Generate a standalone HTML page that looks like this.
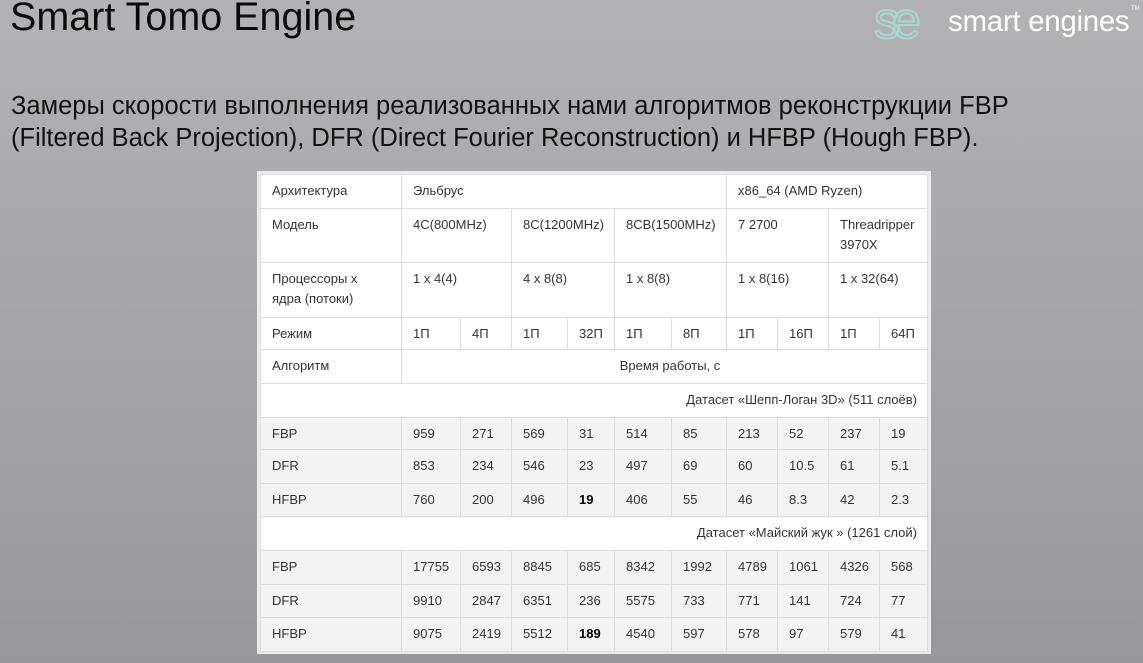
<!DOCTYPE html>
<html><head><meta charset="utf-8"><style>
body{margin:0;width:1143px;height:663px;overflow:hidden;background:linear-gradient(#b3b3b5,#a3a3a5 60%,#99999b);font-family:"Liberation Sans",sans-serif;position:relative}
.t{position:absolute;left:10px;top:-5px;font-size:39.5px;color:#0a0a0a}
.s{position:absolute;left:11px;top:90px;font-size:25.5px;line-height:32px;color:#111}
.logo{position:absolute;left:870px;top:0;width:273px;height:45px}
.frame{position:absolute;left:257px;top:171px;width:674px;height:483px;background:#ececec}
table{position:absolute;left:260px;top:174px;border-collapse:collapse;font-size:13px;color:#333;table-layout:fixed}
td{border:1px solid #dcdcdc;padding:6px 0 0 11px;vertical-align:top;box-sizing:border-box;background:#fff;line-height:20px}
tr.g td{background:#f3f3f3}
td.r{text-align:right;padding-right:10px}
b{color:#000}
</style></head><body>
<div class="t">Smart Tomo Engine</div>
<svg class="logo" viewBox="0 0 273 45">
<text x="4" y="38" font-family="Liberation Sans" font-size="52" fill="none" stroke="#a8d8cf" stroke-width="2" letter-spacing="-8">se</text>
<text x="78" y="31" font-family="Liberation Sans" font-size="29.5" fill="#fff" letter-spacing="-0.3">smart engines</text>
<text x="261" y="10" font-family="Liberation Sans" font-size="6" fill="#fff">TM</text>
</svg>
<div class="s">Замеры скорости выполнения реализованных нами алгоритмов реконструкции FBP<br>(Filtered Back Projection), DFR (Direct Fourier Reconstruction) и HFBP (Hough FBP).</div>
<div class="frame"></div>
<table>
<colgroup><col style="width:141px"><col style="width:59px"><col style="width:51px"><col style="width:56px"><col style="width:47px"><col style="width:57px"><col style="width:55px"><col style="width:51px"><col style="width:51px"><col style="width:51px"><col style="width:48px"></colgroup>
<tr style="height:34px"><td>Архитектура</td><td colspan="6">Эльбрус</td><td colspan="4">x86_64 (AMD Ryzen)</td></tr>
<tr style="height:54px"><td>Модель</td><td colspan="2">4C(800MHz)</td><td colspan="2">8C(1200MHz)</td><td colspan="2">8CB(1500MHz)</td><td colspan="2">7 2700</td><td colspan="2">Threadripper<br>3970X</td></tr>
<tr style="height:55px"><td>Процессоры х<br>ядра (потоки)</td><td colspan="2">1 x 4(4)</td><td colspan="2">4 x 8(8)</td><td colspan="2">1 x 8(8)</td><td colspan="2">1 x 8(16)</td><td colspan="2">1 x 32(64)</td></tr>
<tr style="height:32px"><td>Режим</td><td>1П</td><td>4П</td><td>1П</td><td>32П</td><td>1П</td><td>8П</td><td>1П</td><td>16П</td><td>1П</td><td>64П</td></tr>
<tr style="height:34px"><td>Алгоритм</td><td colspan="10" style="text-align:center">Время работы, с</td></tr>
<tr style="height:34px"><td colspan="11" class="r">Датасет «Шепп-Логан 3D» (511 слоёв)</td></tr>
<tr class="g" style="height:32px"><td>FBP</td><td>959</td><td>271</td><td>569</td><td>31</td><td>514</td><td>85</td><td>213</td><td>52</td><td>237</td><td>19</td></tr>
<tr class="g" style="height:34px"><td>DFR</td><td>853</td><td>234</td><td>546</td><td>23</td><td>497</td><td>69</td><td>60</td><td>10.5</td><td>61</td><td>5.1</td></tr>
<tr class="g" style="height:33px"><td>HFBP</td><td>760</td><td>200</td><td>496</td><td><b>19</b></td><td>406</td><td>55</td><td>46</td><td>8.3</td><td>42</td><td>2.3</td></tr>
<tr style="height:34px"><td colspan="11" class="r">Датасет «Майский жук » (1261 слой)</td></tr>
<tr class="g" style="height:34px"><td>FBP</td><td>17755</td><td>6593</td><td>8845</td><td>685</td><td>8342</td><td>1992</td><td>4789</td><td>1061</td><td>4326</td><td>568</td></tr>
<tr class="g" style="height:33px"><td>DFR</td><td>9910</td><td>2847</td><td>6351</td><td>236</td><td>5575</td><td>733</td><td>771</td><td>141</td><td>724</td><td>77</td></tr>
<tr class="g" style="height:34px"><td>HFBP</td><td>9075</td><td>2419</td><td>5512</td><td><b>189</b></td><td>4540</td><td>597</td><td>578</td><td>97</td><td>579</td><td>41</td></tr>
</table>
</body></html>
